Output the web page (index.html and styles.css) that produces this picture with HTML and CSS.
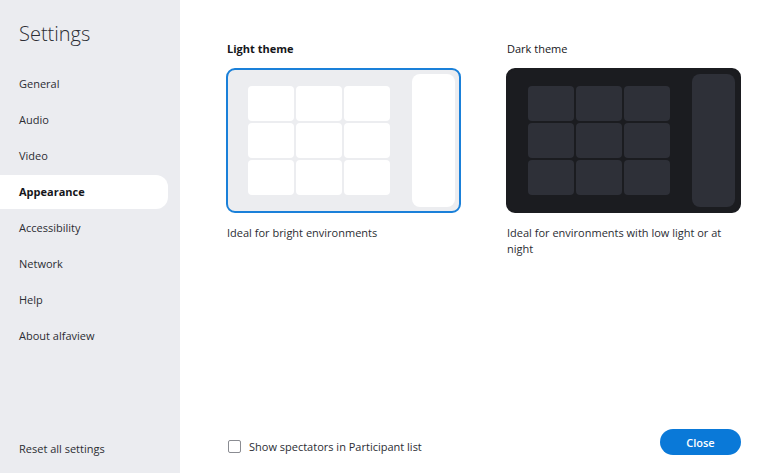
FILE: index.html
```html
<!DOCTYPE html>
<html lang="en">
<head>
<meta charset="utf-8">
<title>Settings</title>
<link rel="stylesheet" href="styles.css">
</head>
<body>
<div class="app">
  <aside class="sidebar">
    <h1 class="title">Settings</h1>
    <nav class="nav">
      <div class="nav-item">General</div>
      <div class="nav-item">Audio</div>
      <div class="nav-item">Video</div>
      <div class="nav-item active">Appearance</div>
      <div class="nav-item">Accessibility</div>
      <div class="nav-item">Network</div>
      <div class="nav-item">Help</div>
      <div class="nav-item">About alfaview</div>
    </nav>
    <div class="reset">Reset all settings</div>
  </aside>
  <main class="main">
    <div class="themes">
      <section class="theme">
        <h2 class="theme-name bold">Light theme</h2>
        <div class="preview light selected">
          <div class="tiles">
            <div class="tile"></div><div class="tile"></div><div class="tile"></div>
            <div class="tile"></div><div class="tile"></div><div class="tile"></div>
            <div class="tile"></div><div class="tile"></div><div class="tile"></div>
          </div>
          <div class="panel"></div>
        </div>
        <p class="desc">Ideal for bright environments</p>
      </section>
      <section class="theme">
        <h2 class="theme-name">Dark theme</h2>
        <div class="preview dark">
          <div class="tiles">
            <div class="tile"></div><div class="tile"></div><div class="tile"></div>
            <div class="tile"></div><div class="tile"></div><div class="tile"></div>
            <div class="tile"></div><div class="tile"></div><div class="tile"></div>
          </div>
          <div class="panel"></div>
        </div>
        <p class="desc">Ideal for environments with low light or at night</p>
      </section>
    </div>
    <div class="footer">
      <label class="check"><span class="box"></span>Show spectators in Participant list</label>
      <button class="close">Close</button>
    </div>
  </main>
</div>
</body>
</html>
```
FILE: styles.css
```css
* { box-sizing: border-box; }
html, body { margin: 0; padding: 0; }
body {
  font-family: "Open Sans", "Noto Sans", sans-serif;
  font-size: 11px;
  color: #2b2d33;
  background: #fff;
}
.app {
  display: flex;
  width: 780px;
  height: 473px;
}
.sidebar {
  width: 180px;
  background: #ebecf0;
  display: flex;
  flex-direction: column;
  padding: 20px 12px 16px 0;
}
.title {
  margin: 0 0 18px 19px;
  font-size: 20px;
  font-weight: 300;
  line-height: 28px;
  color: #2b2d33;
}
.nav {
  display: flex;
  flex-direction: column;
}
.nav-item {
  height: 36px;
  line-height: 36px;
  padding-left: 19px;
  border-radius: 0 12px 12px 0;
}
.nav-item.active {
  background: #fff;
  font-weight: 700;
  color: #15161a;
  height: 34px;
  line-height: 34px;
  margin: 1px 0;
}
.reset {
  margin-top: auto;
  padding-left: 19px;
  line-height: 16px;
}
.main {
  flex: 1;
  display: flex;
  flex-direction: column;
  padding: 40px 39px 18px 46px;
}
.themes {
  display: flex;
  gap: 45px;
}
.theme {
  width: 235px;
}
.theme-name {
  margin: 0 0 11px 1px;
  font-size: 11px;
  font-weight: 400;
  line-height: 17px;
  color: #15161a;
}
.theme-name.bold { font-weight: 700; }
.preview {
  height: 145px;
  border-radius: 9px;
  display: flex;
  justify-content: space-between;
  padding: 4px 4px 4px 20px;
  border: 2px solid transparent;
}
.preview.light { background: #ecedf0; }
.preview.selected { border-color: #1a80d9; }
.preview.dark { background: #1b1c20; border-color: #1b1c20; }
.tiles {
  display: grid;
  grid-template-columns: repeat(3, 46px);
  grid-template-rows: repeat(3, 35px);
  gap: 2px;
  align-self: center;
}
.tile {
  border-radius: 4px;
}
.light .tile { background: #fff; }
.dark .tile { background: #2e3038; }
.panel {
  width: 43px;
  border-radius: 8px;
}
.light .panel { background: #fff; }
.dark .panel { background: #2e3038; }
.desc {
  margin: 12px 0 0 1px;
  line-height: 16px;
  color: #2b2d33;
}
.footer {
  margin-top: auto;
  display: flex;
  align-items: center;
  justify-content: space-between;
}
.check {
  display: flex;
  align-items: center;
  gap: 8px;
  padding-left: 2px;
  margin-top: 8px;
}
.box {
  width: 13px;
  height: 13px;
  border: 1px solid #8a8c92;
  border-radius: 2px;
  background: #fff;
}
.close {
  width: 81px;
  height: 26px;
  border: none;
  border-radius: 13px;
  background: #0a79d8;
  color: #fff;
  font-family: inherit;
  font-size: 11px;
  font-weight: 600;
  cursor: pointer;
}
```
